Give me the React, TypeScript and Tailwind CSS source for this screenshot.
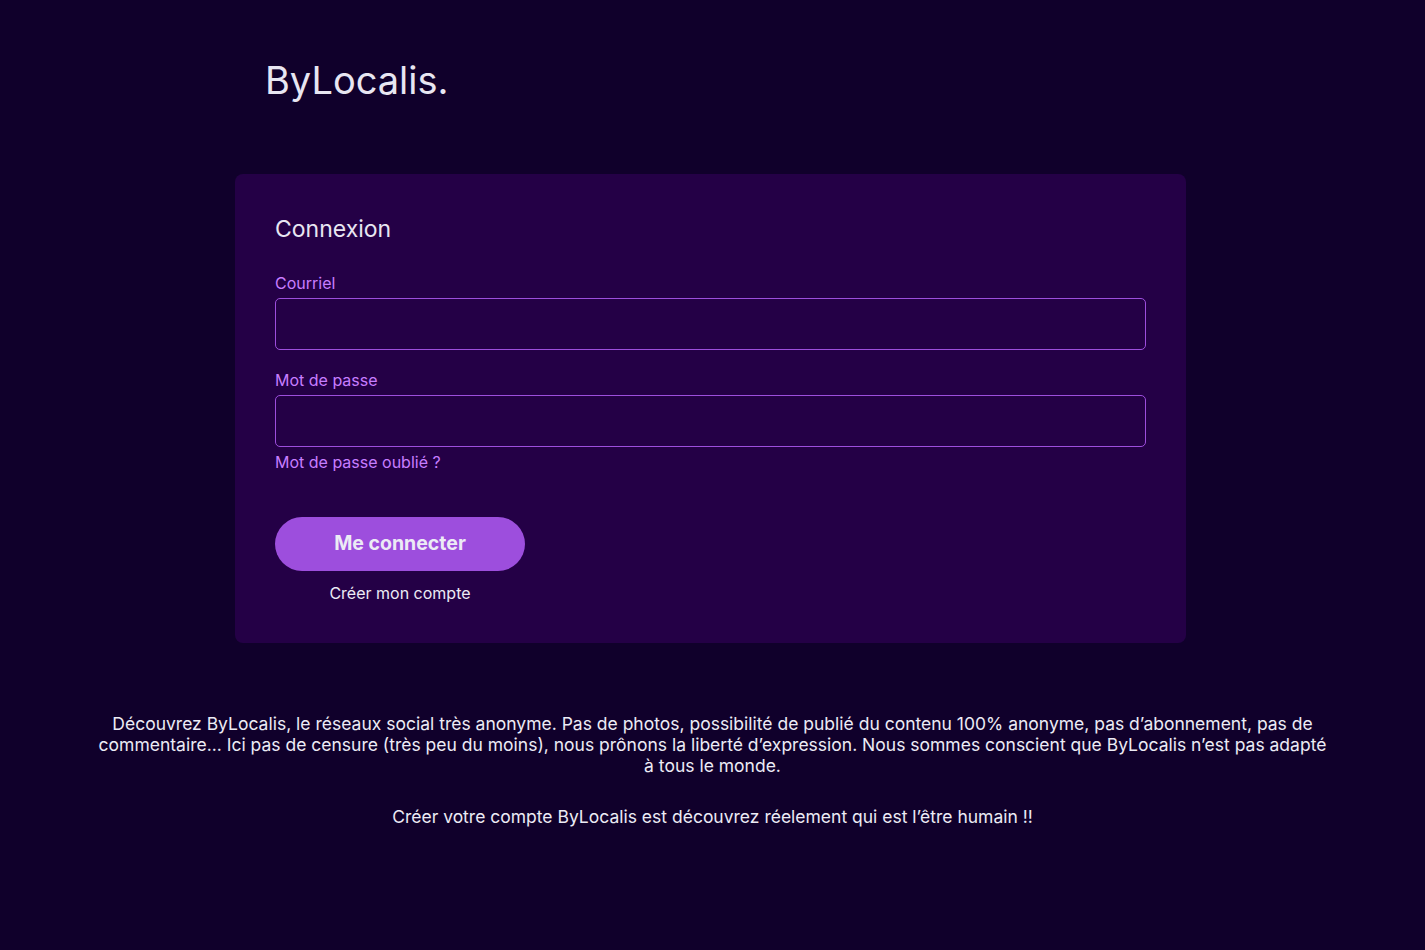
export default function App() {
  return (
    <div className="min-h-[950px] w-full bg-[#10002b] text-[#e6e6f0] [font-family:Inter,'Noto_Sans',sans-serif]">
      <div className="ml-[235px] w-[951px] pt-[50px]">
        <h1 className="ml-[30px] text-[38px] leading-[60px] font-normal text-[#e8e6f2]">ByLocalis.</h1>
        <div className="mt-[64px] rounded-lg bg-[#240046] px-10 pt-[39px] pb-[40px]">
          <h2 className="text-[23px] leading-[32px] text-[#e8e6f2]">Connexion</h2>
          <label className="mt-[28px] block text-base leading-[20px] text-[#c77dff]">Courriel</label>
          <input className="mt-[5px] block h-[52px] w-full rounded-[5px] border border-[#9d4edd] bg-transparent px-3 outline-none" />
          <label className="mt-[20px] block text-base leading-[20px] text-[#c77dff]">Mot de passe</label>
          <input type="password" className="mt-[5px] block h-[52px] w-full rounded-[5px] border border-[#9d4edd] bg-transparent px-3 outline-none" />
          <a className="mt-[5px] block text-base leading-[20px] text-[#c77dff]">Mot de passe oublié ?</a>
          <div className="mt-[45px] flex w-[250px] flex-col items-center">
            <button className="h-[54px] w-[250px] rounded-full bg-[#9d4edd] text-[19.5px] font-bold text-[#ecebf5]">Me connecter</button>
            <a className="mt-[12px] text-base leading-[20px] text-[#ecebf5]">Créer mon compte</a>
          </div>
        </div>
      </div>
      <div className="mx-auto mt-[70px] max-w-[1236px] text-center text-[17.5px] leading-[21px] text-[#ecebf5]">
        <p>
          Découvrez ByLocalis, le réseaux social très anonyme. Pas de photos, possibilité de publié du contenu 100% anonyme, pas d’abonnement, pas de commentaire... Ici pas de censure (très peu du moins), nous prônons la liberté d’expression. Nous sommes conscient que ByLocalis n’est pas adapté à tous le monde.
        </p>
        <p className="mt-[30px]">Créer votre compte ByLocalis est découvrez réelement qui est l’être humain !!</p>
      </div>
    </div>
  );
}
